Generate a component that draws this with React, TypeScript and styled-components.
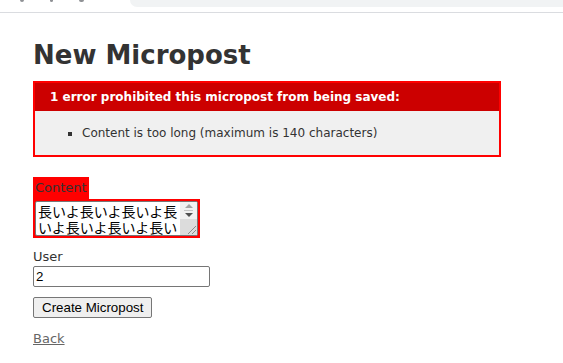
import React from 'react';
import styled, { createGlobalStyle } from 'styled-components';

const GlobalStyle = createGlobalStyle`
  html, body {
    margin: 0;
    padding: 0;
    background: #fff;
  }
  body {
    color: #333;
    font-family: "DejaVu Sans", Verdana, sans-serif;
    font-size: 13px;
    line-height: 18px;
  }
`;

const BrowserBar = styled.div`
  height: 12px;
  border-bottom: 1px solid #dadce0;
  display: flex;
  align-items: flex-start;
  overflow: hidden;
`;

const BarIcons = styled.div`
  width: 110px;
  display: flex;
  gap: 26px;
  padding-left: 20px;
`;

const IconStub = styled.span<{ $w: number }>`
  width: ${({ $w }) => $w}px;
  height: 2px;
  background: #5f6368;
  border-radius: 0 0 2px 2px;
  opacity: 0.7;
`;

const Omnibox = styled.div`
  flex: 1;
  height: 7px;
  background: #f1f3f4;
  border-bottom-left-radius: 8px;
`;

const Page = styled.div`
  padding: 33px;
`;

const Title = styled.h1`
  font-size: 26px;
  line-height: 18px;
  font-weight: bold;
  margin: 0 0 17px;
`;

const ErrorBox = styled.div`
  width: 450px;
  border: 2px solid red;
  padding: 7px 7px 0;
  margin-bottom: 20px;
  background: #f0f0f0;
`;

const ErrorTitle = styled.h2`
  text-align: left;
  font-weight: bold;
  padding: 5px 5px 5px 15px;
  font-size: 12px;
  line-height: 18px;
  margin: -7px -7px 0;
  background: #c00;
  color: #fff;
`;

const ErrorList = styled.ul`
  margin: 13px 0;
  padding-left: 40px;
  list-style: square;

  li {
    font-size: 12px;
    line-height: 18px;
  }
`;

const Field = styled.div`
  margin-bottom: 10px;
`;

const WithErrors = styled.div`
  display: table;
  padding: 2px;
  background-color: red;
`;

const Label = styled.label`
  display: block;
`;

// textarea with a classic (non-overlay) scrollbar column beside it
const TextBox = styled.div`
  display: flex;
  box-sizing: border-box;
  width: 163px;
  height: 35px;
  border: 1px solid #767676;
  border-radius: 2px;
  background: #fff;
  overflow: hidden;
`;

const TextArea = styled.textarea`
  flex: 1;
  min-width: 0;
  margin: 0;
  padding: 1px 2px;
  border: none;
  outline: none;
  resize: none;
  overflow: hidden;
  font-family: "Noto Sans CJK JP", monospace;
  font-size: 14px;
  line-height: 16px;
  color: #000;
  background: transparent;
`;

const ScrollBar = styled.div`
  width: 17px;
  display: flex;
  flex-direction: column;
  background: #f1f1f1;
`;

const ArrowButton = styled.div`
  height: 8px;
  display: flex;
  align-items: center;
  justify-content: center;
`;

const Arrow = styled.span<{ $up?: boolean; $color: string }>`
  width: 0;
  height: 0;
  border-left: 4px solid transparent;
  border-right: 4px solid transparent;
  ${({ $up, $color }) =>
    $up ? `border-bottom: 4px solid ${$color};` : `border-top: 4px solid ${$color};`}
`;

const Divider = styled.div`
  height: 1px;
  margin: 0 4px;
  background: #c4c4c4;
`;

const Corner = styled.div`
  flex: 1;
  background: #dcdcdc;
  display: flex;
  align-items: flex-end;
  justify-content: flex-end;
`;

const TextInput = styled.input`
  display: block;
  box-sizing: border-box;
  width: 177px;
  height: 21px;
  margin: 0;
  padding: 1px 2px;
  border: 1px solid #767676;
  border-radius: 2px;
  font-family: "Liberation Sans", Arial, sans-serif;
  font-size: 13.33px;
  color: #000;
`;

const Actions = styled.div`
  margin: 10px 0 12px;
`;

const Button = styled.button`
  height: 21px;
  padding: 1px 8px;
  border: 1px solid #767676;
  border-radius: 2px;
  background: #efefef;
  font-family: "Liberation Sans", Arial, sans-serif;
  font-size: 13.33px;
  color: #000;
`;

const BackLink = styled.a`
  color: #666;
  text-decoration: underline;
`;

const longText = '長いよ'.repeat(50);

export default function App() {
  return (
    <>
      <GlobalStyle />
      <BrowserBar>
        <BarIcons>
          <IconStub $w={4} />
          <IconStub $w={3} />
          <IconStub $w={5} />
        </BarIcons>
        <Omnibox />
      </BrowserBar>
      <Page>
        <Title>New Micropost</Title>
        <ErrorBox>
          <ErrorTitle>1 error prohibited this micropost from being saved:</ErrorTitle>
          <ErrorList>
            <li>Content is too long (maximum is 140 characters)</li>
          </ErrorList>
        </ErrorBox>
        <Field>
          <WithErrors>
            <Label htmlFor="micropost_content">Content</Label>
          </WithErrors>
          <WithErrors>
            <TextBox>
              <TextArea id="micropost_content" defaultValue={longText} />
              <ScrollBar>
                <ArrowButton>
                  <Arrow $up $color="#a3a3a3" />
                </ArrowButton>
                <Divider />
                <ArrowButton>
                  <Arrow $color="#505050" />
                </ArrowButton>
                <Corner>
                  <svg width="11" height="11" viewBox="0 0 11 11">
                    <path d="M10 2 L2 10 M10 6 L6 10" stroke="#8a8a8a" strokeWidth="1" />
                  </svg>
                </Corner>
              </ScrollBar>
            </TextBox>
          </WithErrors>
        </Field>
        <Field>
          <Label htmlFor="micropost_user_id">User</Label>
          <TextInput id="micropost_user_id" type="text" defaultValue="2" />
        </Field>
        <Actions>
          <Button type="submit">Create Micropost</Button>
        </Actions>
        <BackLink href="#">Back</BackLink>
      </Page>
    </>
  );
}
